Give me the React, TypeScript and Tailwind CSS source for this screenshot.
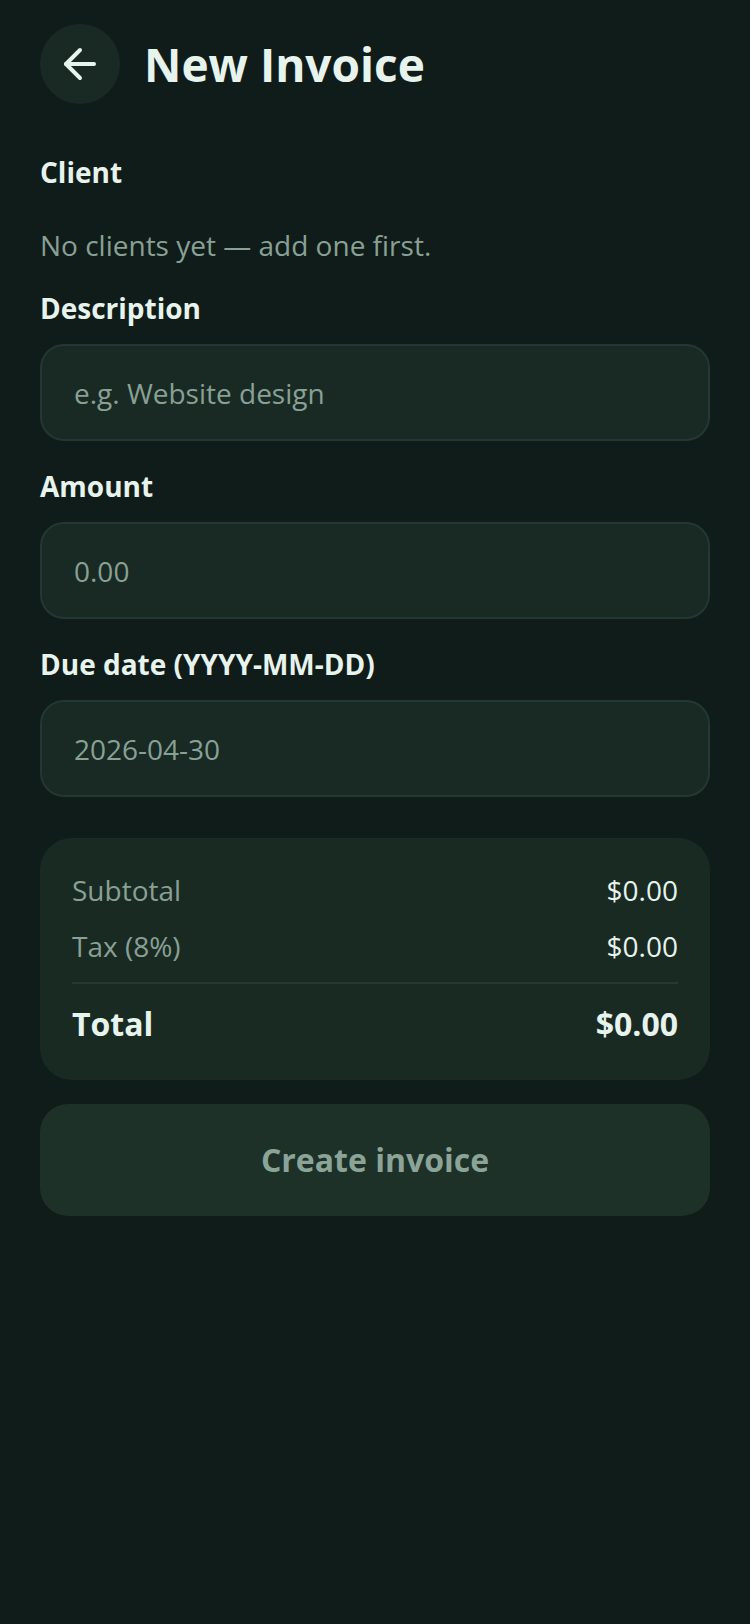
import { ArrowLeft } from "lucide-react";

const font = { fontFamily: '"Open Sans", "Noto Sans", sans-serif' };

function Field({ label, placeholder }: { label: string; placeholder: string }) {
  return (
    <div className="mb-[25px] flex flex-col">
      <div className="mb-4 text-[28px] leading-10 font-bold text-[#e7f3ed]">{label}</div>
      <div className="flex h-[97px] items-center rounded-3xl border-2 border-[#233830] bg-[#182a23] px-8">
        <span className="text-[28px] text-[#89a095]">{placeholder}</span>
      </div>
    </div>
  );
}

export default function App() {
  return (
    <div className="flex min-h-[1624px] flex-col bg-[#101c19] px-10 pt-6" style={font}>
      {/* Header */}
      <div className="mb-12 flex items-center gap-6">
        <button className="flex h-20 w-20 items-center justify-center rounded-full bg-[#192a24] text-[#e7f3ed]">
          <ArrowLeft size={48} strokeWidth={2} />
        </button>
        <h1 className="text-[46px] leading-none font-bold text-[#e7f3ed]">New Invoice</h1>
      </div>

      <div className="text-[28px] leading-10 font-bold text-[#e7f3ed]">Client</div>
      <div className="mt-8 text-[28px] leading-[42px] text-[#89a095]">No clients yet — add one first.</div>

      <div className="mt-[22px] flex flex-col">
        <Field label="Description" placeholder="e.g. Website design" />
        <Field label="Amount" placeholder="0.00" />
        <Field label="Due date (YYYY-MM-DD)" placeholder="2026-04-30" />
      </div>

      {/* Summary */}
      <div className="mt-4 rounded-[32px] bg-[#192a23] p-8">
        <div className="flex items-center justify-between text-[28px] leading-10">
          <span className="text-[#89a095]">Subtotal</span>
          <span className="text-[#e7f3ed]">$0.00</span>
        </div>
        <div className="mt-4 flex items-center justify-between text-[28px] leading-10">
          <span className="text-[#89a095]">Tax (8%)</span>
          <span className="text-[#e7f3ed]">$0.00</span>
        </div>
        <div className="my-4 h-[2px] bg-[#243a31]" />
        <div className="flex items-center justify-between text-[32px] leading-[48px] font-bold text-[#e7f3ed]">
          <span>Total</span>
          <span>$0.00</span>
        </div>
      </div>

      <button className="mt-6 flex h-28 w-full items-center justify-center rounded-[28px] bg-[#1d3129] text-[32px] font-bold text-[#8ba497]">
        Create invoice
      </button>
    </div>
  );
}
